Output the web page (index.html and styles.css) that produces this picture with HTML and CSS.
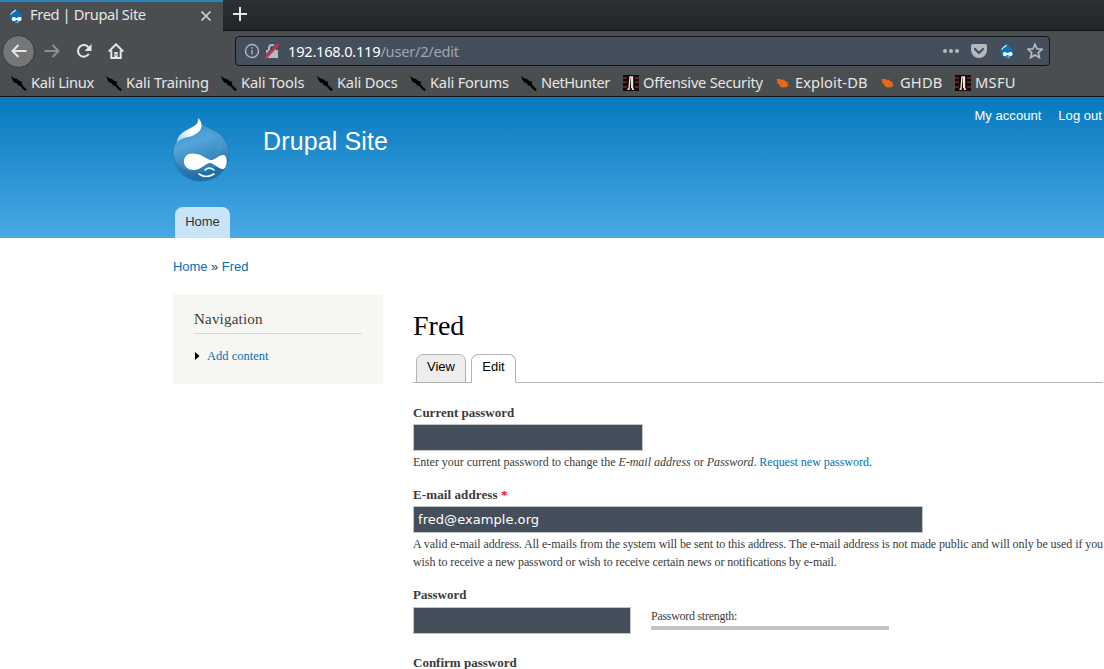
FILE: index.html
```html
<!DOCTYPE html>
<html lang="en">
<head>
<meta charset="utf-8">
<title>Fred | Drupal Site</title>
<link rel="stylesheet" href="styles.css">
</head>
<body>
<svg class="defs" width="0" height="0" aria-hidden="true">
  <symbol id="kali" viewBox="0 0 16 16"><path fill="#000" d="M0 0.500l2.500 2.500 3.500 1 3 2.500 1.500-.5 0.500 3.500 2.500 3 2.300 2-1 1.500-2.500-1.500-3-3.500-2-0.500-2-2.500-2-0.500L1.500 5z"/></symbol>
  <symbol id="offsec" viewBox="0 0 16 16"><path fill="#140909" d="M0 0h16v16H0z"/><path fill="#5a2424" d="M0 2h4v2H0zM12 2h4v2h-4zM0 6h4v2H0zM12 6h4v2h-4zM0 11h4v2H0zM12 11h4v2h-4z"/><path fill="none" stroke="#eee3da" stroke-width="1.400" d="M4.500 14.300H6L7 2h2.500v12.300H11"/><path stroke="#eee3da" d="M8.500 2v11"/></symbol>
  <symbol id="exploit" viewBox="0 0 16 16"><path fill="#e8681a" d="M1.500 4l3.500 0 2 1 2-.5 1.500 2 2 .5 0 2 1.500 1.500-2 .500 0 1.500-2-.5-2 .500-2-.5-1.500-1.500-1-2-1.500-.5.500-1.500z"/></symbol>
  <symbol id="drop" viewBox="0 0 16 16"><path fill="#0875bb" d="M8 1c1 2 3 2 4.500 4 3.500 5 .5 10-4.500 10S0 10 3.500 5C5 3 7 3 8 1z"/><path fill="#d8f1ff" d="M7.500 2C7 4 4 4 2.800 6.500 3.500 4 6 3.500 7.500 2z" stroke="#d8f1ff"/><path fill="#fff" d="M4 11c0-3 3-2 4.500-.7C10 9 13.500 8 13.500 11s-3 2-5 .7C7 13 4 14 4 11zM7 13.500q2 1 4-.3l-.5 1q-2 .8-3.500-.7z"/></symbol>
</svg>

<div class="browser">
  <div class="tabbar">
    <div class="tab">
      <svg class="i16"><use href="#drop"/></svg>
      <span class="tab-title">Fred | Drupal Site</span>
      <svg class="close" viewBox="0 0 12 12"><path d="M1.500 1.500l9 9m0-9l-9 9"/></svg>
    </div>
    <svg class="plus" viewBox="0 0 14 14"><path d="M7 0v14M0 7h14"/></svg>
  </div>
  <div class="toolbar">
    <span class="back"><svg class="nav" viewBox="0 0 16 16"><path d="M15.500 8H1.500m6-6l-6 6 6 6"/></svg></span>
    <svg class="nav forward" viewBox="0 0 16 16"><path d="M.5 8h14m-6-6l6 6-6 6"/></svg>
    <svg class="nav reload" viewBox="0 0 16 16"><path d="M12.800 10.800a5.800 5.800 0 1 1-.3-6.300"/><path class="solid" d="M15.500 1v7H8.500z"/></svg>
    <svg class="nav home" viewBox="0 0 16 16"><path d="M.8 8.500L8 1.300l7.200 7.200M3.300 7.500V15h9.400V7.500"/><path class="solid" d="M6.300 9h3.400v6H6.300z"/><path d="M8 11v1.500" stroke="#4b4e51" stroke-width="1"/></svg>
    <div class="url">
      <svg class="info" viewBox="0 0 16 16"><circle cx="8" cy="8" r="6.500"/><path d="M8 7v4.500M8 4.200v1.600"/></svg>
      <svg class="lock" viewBox="0 0 16 16"><path fill="none" stroke="#b4bac0" stroke-width="2" d="M5 8V5a3 3 0 0 1 6 0v3"/><path fill="#b4bac0" d="M2 7h12v8H2z"/><path stroke="#454f5b" stroke-width="3.600" d="M1 14.500L14 1"/><path stroke="#e22850" stroke-width="2.400" d="M1.500 15L14.500 1"/></svg>
      <span class="address">192.168.0.119<span class="path">/user/2/edit</span></span>
      <svg class="i16 dots" viewBox="0 0 16 16"><circle cx="2" cy="8" r="2"/><circle cx="8" cy="8" r="2"/><circle cx="14" cy="8" r="2"/></svg>
      <svg class="i16 pocket" viewBox="0 0 16 16"><path fill="#b4b9be" d="M2 1h12q2 0 2 2v4a8 8 0 0 1-16 0V3q0-2 2-2z"/><path fill="none" stroke="#454f5b" stroke-width="2.200" stroke-linecap="round" stroke-linejoin="round" d="M4 6l4 4 4-4"/></svg>
      <svg class="i16 drop-small"><use href="#drop"/></svg>
      <svg class="i16 star" viewBox="0 0 16 16"><path d="M8 1.300l2 4.500 5 .5-3.700 3.300 1.100 5L8 12l-4.400 2.600 1.100-5L1 6.300l5-.5z"/></svg>
    </div>
  </div>
  <div class="bookmarks">
    <a class="bm linux"><svg class="i16"><use href="#kali"/></svg><span>Kali Linux</span></a>
    <a class="bm training"><svg class="i16"><use href="#kali"/></svg><span>Kali Training</span></a>
    <a class="bm tools"><svg class="i16"><use href="#kali"/></svg><span>Kali Tools</span></a>
    <a class="bm docs"><svg class="i16"><use href="#kali"/></svg><span>Kali Docs</span></a>
    <a class="bm forums"><svg class="i16"><use href="#kali"/></svg><span>Kali Forums</span></a>
    <a class="bm nethunter"><svg class="i16"><use href="#kali"/></svg><span>NetHunter</span></a>
    <a class="bm offensive"><svg class="i16"><use href="#offsec"/></svg><span>Offensive Security</span></a>
    <a class="bm exploitdb"><svg class="i16"><use href="#exploit"/></svg><span>Exploit-DB</span></a>
    <a class="bm ghdb"><svg class="i16"><use href="#exploit"/></svg><span>GHDB</span></a>
    <a class="bm msfu"><svg class="i16"><use href="#offsec"/></svg><span>MSFU</span></a>
  </div>
</div>

<header class="site-header">
  <div class="brand">
    <svg class="logo" viewBox="0 0 58 66">
      <defs>
        <linearGradient id="body" x1="0" y1="0" x2="0.300" y2="1"><stop offset="0" stop-color="#2386c3"/><stop offset=".45" stop-color="#54a5d9"/><stop offset="1" stop-color="#2473aa"/></linearGradient>
        <linearGradient id="shine" x1="1" y1="0" x2="0" y2="1"><stop offset=".5" stop-color="#fff"/><stop offset="1" stop-color="#9dcbe9"/></linearGradient>
      </defs>
      <path fill="url(#body)" stroke="#2475aa" stroke-width=".7" d="M27 1C29 9 36 10 43 14 53 20 57 28 57 37 57 53 44 64 29 64S1 53 1 37C1 27 7 18 15 13 21 10 26 8 27 1z"/>
      <path fill="#1768a0" opacity=".35" d="M1.500 39C8 57 33 64 56 41 53 56 42 64 29 64 15 64 3 54 1.500 39z"/>
      <path fill="#4799ce" opacity=".7" d="M31 8C43 14 52 20 51 31 49 36 43 33 44 29 46 20 37 14 31 8z"/>
      <path fill="url(#shine)" d="M26.500 1C32 8 30 15 20 19 13 21 8 21 5 26 5 16 16 13 22 9 26 7 26 4 26.500 1z"/>
      <path fill="#fff" d="M12 46C11 38 18 35 24 37 30 37 35 43 39 43 43 43 48 37 52 38 56 40 55 48 53 51 49 55 42 46 38 46 34 46 29 53 22 53 16 53 13 50 12 46z"/>
      <path fill="none" stroke="#fff" stroke-width="1.600" stroke-linecap="round" d="M33 53q4-4 9 0M27 57q7 5 15 0"/>
    </svg>
    <div class="site-name">Drupal Site</div>
    <nav class="user-menu"><a>My account</a><a>Log out</a></nav>
  </div>
  <a class="main-tab">Home</a>
</header>

<div class="breadcrumb"><a>Home</a> » <a>Fred</a></div>

<div class="layout">
  <aside class="sidebar">
    <h2>Navigation</h2>
    <div class="menu-row"><svg class="arrow" viewBox="0 0 5 8"><path d="M0 0l4.500 4L0 8z"/></svg><a>Add content</a></div>
  </aside>
  <main class="content">
    <h1>Fred</h1>
    <div class="tabs"><a class="view">View</a><a class="active">Edit</a></div>
    <label>Current password</label>
    <input class="current" type="password">
    <p class="help"><span class="l1">Enter your current password to change the <em>E-mail address</em> or <em>Password</em>. <a>Request new password</a>.</span></p>
    <label class="mail-label">E-mail address <span class="required">*</span></label>
    <input class="email" type="text" value="fred@example.org">
    <p class="help two"><span class="l2">A valid e-mail address. All e-mails from the system will be sent to this address. The e-mail address is not made public and will only be used if you</span><br><span class="l3">wish to receive a new password or wish to receive certain news or notifications by e-mail.</span></p>
    <label>Password</label>
    <div class="pass-row">
      <input class="pass" type="password">
      <div class="strength"><span>Password strength:</span><div class="meter"></div></div>
    </div>
    <label>Confirm password</label>
  </main>
</div>
</body>
</html>
```
FILE: styles.css
```css
* { box-sizing: border-box; }
html, body { margin: 0; height: 669px; overflow: hidden; }
body { width: 1104px; background: #fff; color: #3b3b3b; font-family: "Liberation Serif", serif; }
svg { display: block; flex: none; }
.defs { position: absolute; }
.i16 { width: 16px; height: 16px; }

.browser { height: 97px; background: #4b4e51; border-bottom: 1px solid #101214; color: #e6e7e5; font: 14.67px/20px "Noto Sans", sans-serif; }
.tabbar { height: 31px; display: flex; background: linear-gradient(#2b3034, #222629); border-bottom: 1px solid #101214; }
.tab { width: 223px; height: 31px; padding: 0 11px 2px 8px; display: flex; align-items: center; background: #4b4e51; border-top: 2px solid #2b84bd; }
.tab-title { margin: -4px 0 0 6px; flex: 1; white-space: nowrap; font-size: 14.67px; letter-spacing: -.37px; }
.close { width: 12px; height: 12px; fill: none; stroke: #d3d7cf; stroke-width: 1.700; }
.plus { width: 14px; height: 14px; margin: 7px 0 0 10px; stroke: #e5e5e5; stroke-width: 2; }
.toolbar { height: 40px; display: flex; align-items: center; padding-left: 2px; }
.back { width: 33px; height: 33px; border-radius: 50%; display: grid; place-items: center; background: #747678; border: 1px solid #35383a; }
.nav { width: 16px; height: 16px; fill: none; stroke: #e4e5e5; stroke-width: 2; }
.nav .solid { fill: #e4e5e5; stroke: none; }
.forward { margin-left: 9px; stroke: #8c8e90; }
.reload { margin-left: 16px; }
.home { margin-left: 16px; }
.url { width: 815px; height: 30px; margin-left: 111px; padding: 0 6px 0 8px; display: flex; align-items: center; background: #454f5b; border: 1px solid #111417; border-radius: 4px; }
.info { width: 16px; height: 16px; fill: none; stroke: #b0b6bc; stroke-width: 1.400; }
.lock { width: 16px; height: 16px; margin-left: 4px; }
.address { margin-left: 8px; flex: 1; color: #fff; font-size: 14.67px; letter-spacing: -.25px; white-space: nowrap; }
.path { color: #a1a7ae; }
.dots { fill: #b4b9be; }
.pocket { margin-left: 12px; }
.drop-small { margin-left: 12px; }
.star { margin-left: 12px; fill: none; stroke: #b4b9be; stroke-width: 1.700; }
.bookmarks { height: 25px; padding: 0 0 1px 11px; display: flex; align-items: center; font-size: 14.67px; }
.bm { display: flex; align-items: center; gap: 4px; white-space: nowrap; }
.bm span { margin-top: -3px; }
.linux { width: 95px; letter-spacing: -.3px; }
.training { width: 115px; letter-spacing: -.15px; }
.tools { width: 96px; letter-spacing: -.1px; }
.docs { width: 93px; letter-spacing: -.2px; }
.forums { width: 111px; letter-spacing: -.2px; }
.nethunter { width: 102px; letter-spacing: -.5px; }
.offensive { width: 152px; letter-spacing: -.25px; }
.exploitdb { width: 105px; letter-spacing: .1px; }
.ghdb { width: 75px; letter-spacing: .2px; }
.msfu { width: 61px; letter-spacing: .3px; }

.site-header { height: 141px; padding-left: 172px; background: linear-gradient(#0779bf, #48a9e4); color: #fff; font-family: "Liberation Sans", sans-serif; }
.brand { height: 110px; display: flex; }
.logo { width: 58px; height: 66px; margin-top: 20px; }
.site-name { margin: 29px 0 0 33px; flex: 1; font-size: 25px; letter-spacing: .13px; line-height: 30px; }
.user-menu { display: flex; gap: 17px; padding: 10px 2px 0 0; font-size: 13px; letter-spacing: .04px; line-height: 18px; white-space: nowrap; }
.main-tab { display: block; width: 55px; height: 31px; margin-left: 3px; border-radius: 8px 8px 0 0; background: #c8e4f6; color: #333; text-align: center; font-size: 13px; line-height: 29px; }
.breadcrumb { height: 56px; padding: 19px 0 0 173px; font: 13px/19px "Liberation Sans", sans-serif; letter-spacing: -.05px; }
a { text-decoration: none; }
.breadcrumb a, .help a, .menu-row a { color: #0071b3; }
.layout { display: flex; padding-left: 173px; }
.sidebar { width: 210px; height: 90px; padding: 15px 20px 0 21px; background: #f6f6f2; border: 1px solid #f9f9f6; border-width: 1px 1px 1px 0; }
.sidebar h2 { margin: 0; height: 24px; border-bottom: 1px solid #d6d6d6; font-size: 15px; letter-spacing: .2px; line-height: 18px; font-weight: 400; }
.menu-row { display: flex; align-items: center; gap: 7px; padding-left: 1px; margin-top: 13px; font-size: 12.500px; line-height: 18px; }
.arrow { width: 5px; height: 8px; }
.content { width: 691px; margin-left: 30px; display: flex; flex-direction: column; align-items: flex-start; }
h1 { margin: 14px 0 0; font-size: 28px; line-height: 36px; font-weight: 400; color: #000; }
.tabs { width: 690px; height: 29px; margin: 10px 0 21px; padding-left: 3px; display: flex; gap: 5px; border-bottom: 1px solid #b4b4b4; color: #000; font: 13px/24px "Liberation Sans", sans-serif; }
.tabs a { height: 29px; width: 50px; text-align: center; border: 1px solid #b4b4b4; border-radius: 7px 7px 0 0; background: #ededed; }
.tabs .active { width: 45px; background: #fff; border-bottom-color: #fff; }
label { height: 20px; font-size: 13px; line-height: 18px; font-weight: 700; white-space: nowrap; }
.mail-label { letter-spacing: .1px; }
.required { color: #f00; }
input { height: 27px; padding: 0 4px; border: 1px solid #c2c4c6; border-radius: 0; background: #454f5b; color: #fff; font: 13px "DejaVu Sans", sans-serif; letter-spacing: .05px; }
.current { width: 230px; }
.email { width: 510px; }
.help { height: 33px; margin: 2px 0 0; font-size: 12px; line-height: 18px; white-space: nowrap; }
.help.two { height: 51px; }
.l1 { letter-spacing: -.02px; }
.l2 { letter-spacing: -.083px; }
.l3 { letter-spacing: -.09px; }
.pass-row { display: flex; gap: 20px; height: 47px; margin-top: 1px; }
.pass { width: 218px; }
.strength { width: 238px; font-size: 12px; letter-spacing: -.28px; line-height: 18px; }
.meter { height: 4px; margin-top: 1px; background: #c4c4c4; }
```
